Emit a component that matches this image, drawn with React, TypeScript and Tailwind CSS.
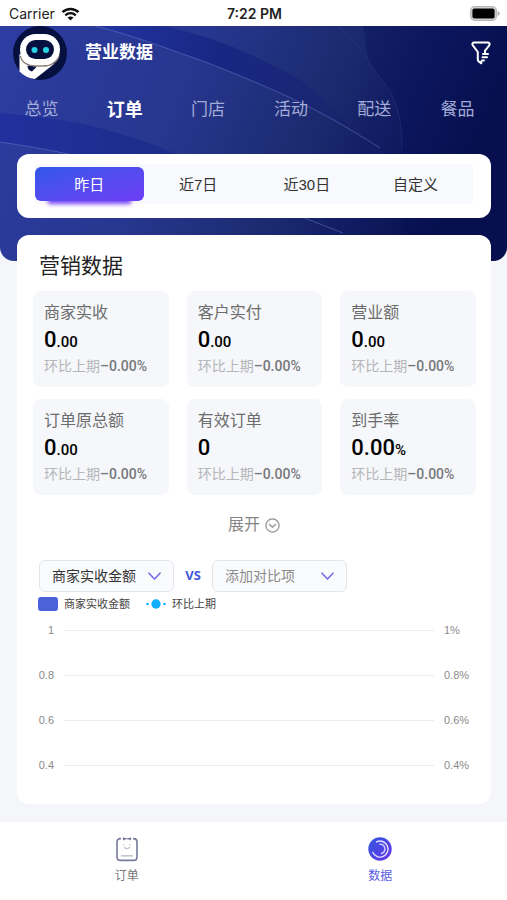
import { useState } from "react";

const cjk = "font-['Liberation_Sans','Noto_Sans_CJK_SC',sans-serif]";

const tabs = ["总览", "订单", "门店", "活动", "配送", "餐品"];
const ranges = ["昨日", "近7日", "近30日", "自定义"];

const metrics = [
  { label: "商家实收", whole: "0", rest: ".00" },
  { label: "客户实付", whole: "0", rest: ".00" },
  { label: "营业额", whole: "0", rest: ".00" },
  { label: "订单原总额", whole: "0", rest: ".00" },
  { label: "有效订单", whole: "0", rest: "" },
  { label: "到手率", whole: "0.00", rest: "%" },
];

const ticks = [
  ["1", "1%"],
  ["0.8", "0.8%"],
  ["0.6", "0.6%"],
  ["0.4", "0.4%"],
];

function StatusBar() {
  return (
    <div className="grid h-[26px] grid-cols-3 items-center bg-white pt-px pr-[7px] pl-[9px] font-['Inter',sans-serif] text-sm text-[#222]">
      <div className="flex items-center gap-[6px]">
        <span>Carrier</span>
        <svg width="19" height="14" viewBox="0 0 18 14" fill="none" stroke="#111" aria-hidden="true">
          <path d="M1 5.2C5.6.9 12.4.9 17 5.2" strokeWidth="2.5" />
          <path d="M3.8 8.3c3-2.8 7.4-2.8 10.4 0" strokeWidth="2.3" />
          <path d="M6 10.6c1.6-1.5 4.400-1.5 6 0L9 13.6z" fill="#111" stroke="none" />
        </svg>
      </div>
      <div className="text-center font-semibold">7:22 PM</div>
      <svg className="justify-self-end" width="30" height="15" viewBox="0 0 30 15" aria-hidden="true">
        <rect x=".7" y=".7" width="25.6" height="13.6" rx="4" fill="#d8d8d8" stroke="#b5b5b5" strokeWidth="1.3" />
        <rect x="2.4" y="2.4" width="22.2" height="10.2" rx="2" fill="#000" />
        <path d="M27.6 5v5c1.2-.4 2-1.300 2-2.500s-.8-2.100-2-2.500z" fill="#a9a9a9" />
      </svg>
    </div>
  );
}

function HeaderBackdrop() {
  return (
    <svg
      className="absolute inset-0 size-full"
      viewBox="0 0 507 235"
      preserveAspectRatio="none"
      aria-hidden="true"
    >
      <defs>
        <linearGradient id="base" x1="0" y1="0" x2="1" y2="0.2">
          <stop offset="0" stopColor="#2d3da2" />
          <stop offset=".4" stopColor="#27368e" />
          <stop offset=".68" stopColor="#1b2a6e" />
          <stop offset=".82" stopColor="#111c62" />
          <stop offset="1" stopColor="#08104a" />
        </linearGradient>
        <linearGradient id="band" x1="0" y1="0" x2="1" y2="0">
          <stop offset="0" stopColor="#2234a0" />
          <stop offset=".45" stopColor="#182682" />
          <stop offset="1" stopColor="#15206a" stopOpacity=".3" />
        </linearGradient>
        <linearGradient id="low" x1="0" y1="0" x2="1" y2="0">
          <stop offset="0" stopColor="#20319e" />
          <stop offset=".5" stopColor="#1c2c88" />
          <stop offset="1" stopColor="#152068" stopOpacity=".3" />
        </linearGradient>
      </defs>
      <rect width="507" height="235" fill="url(#base)" />
      <path d="M363 0C366 12 366 26 370 37C378 52 388 58 393 71C401 90 402 106 402 124V235H507V0Z" fill="#070f58" opacity=".35" />
      <path d="M337 0C350 8 358 20 370 37C378 52 388 58 393 71C401 90 402 106 402 124" fill="none" stroke="#4a59b0" opacity=".25" />
      <path d="M95 0C135 10 165 22 200 34C232 46 255 56 280 67C318 84 345 100 380 122C362 108 350 98 333 84C322 72 314 63 300 54C280 42 257 31 233 21C210 12 188 5 163 0Z" fill="url(#band)" />
      <path d="M95 0C135 10 165 22 200 34C232 46 255 56 280 67C318 84 345 100 380 122" fill="none" stroke="#8090d8" opacity=".4" />
      <path d="M0 87C35 90 70 94 100 102C125 109 147 116 167 124C230 150 290 176 343 207C330 203 320 198 307 193C220 160 130 138 63 127C45 123 20 119 0 116Z" fill="url(#low)" />
      <path d="M0 116C20 119 45 123 63 127C130 138 220 160 307 193L343 207" fill="none" stroke="#8090d8" opacity=".4" />
    </svg>
  );
}

function Robot() {
  return (
    <svg width="54" height="54" viewBox="0 0 54 54" className="shrink-0" aria-hidden="true">
      <circle cx="27" cy="27" r="27" fill="#06103f" />
      <path d="M6.500 28V45.500C11 50 16 52.500 22 53L41 38Z" fill="#fff" />
      <path d="M14.500 39.500 24 40.500 19 45.500q-4.500-1-4.500-6z" fill="#06103f" />
      <path d="M7.500 30c1 7 8 10 15 10h7c8 0 15-3.500 16.500-11" fill="none" stroke="#8d8578" strokeWidth="1.500" />
      <rect x="7" y="8" width="40" height="31" rx="15.500" fill="#fff" />
      <rect x="13" y="14" width="28" height="19" rx="9.500" fill="#06103f" />
      <circle cx="21.500" cy="24" r="3" fill="#27d3e6" />
      <circle cx="33" cy="24" r="3" fill="#27d3e6" />
    </svg>
  );
}

function Header() {
  const [tab, setTab] = useState(1);
  const [range, setRange] = useState(0);
  return (
    <header className="relative overflow-hidden rounded-b-[14px] pb-[43px]">
      <HeaderBackdrop />
      <div className="relative">
        <div className="flex items-center pr-4 pl-[13px]">
          <Robot />
          <h1 className="ml-[18px] flex-1 text-[17px] font-bold text-white">营业数据</h1>
          <button type="button" aria-label="筛选" className="text-white">
            <svg width="20" height="24" viewBox="0 0 20 24" fill="none" stroke="currentColor" strokeWidth="2" strokeLinecap="round" strokeLinejoin="round">
              <path d="M14.300 9.500 18.200 4.300c.9-1.300.3-2.700-1.500-2.700H3.300c-1.800 0-2.400 1.400-1.500 2.700L6.800 11v7.500c0 1.500.8 2.400 3.500 3.800V20.500" />
              <path d="M14 9.500v2.800M12 13h5M11.500 16.200h4.500M11 19.400h2" />
            </svg>
          </button>
        </div>
        <nav className="grid h-[58px] grid-cols-6 items-center pt-[2px] pr-2">
          {tabs.map((t, i) => (
            <button
              key={t}
              type="button"
              onClick={() => setTab(i)}
              className={i === tab ? "text-lg font-bold text-white" : "text-[17px] text-[#a3acd8]"}
            >
              {t}
            </button>
          ))}
        </nav>
        <div className="mt-4 mr-4 ml-[17px] rounded-xl bg-white px-[18px] pt-[10px] pb-[14px]">
          <div className="grid h-10 grid-cols-4 items-center rounded bg-[#f8f9fc] pr-[3px]">
            {ranges.map((r, i) => (
              <button
                key={r}
                type="button"
                onClick={() => setRange(i)}
                className={
                  i === range
                    ? "h-[34px] rounded-md bg-linear-to-br from-[#2f57ea] to-[#6d3df5] pt-[2px] text-[15px] text-white shadow-[0_16px_4px_-13px_#7a45f5]"
                    : "h-[34px] pt-[2px] text-[15px] text-[#333]"
                }
              >
                {r}
              </button>
            ))}
          </div>
        </div>
      </div>
    </header>
  );
}

function Metrics() {
  return (
    <div className="grid grid-cols-3 gap-x-[18px] gap-y-3 pr-[15px] pl-4">
      {metrics.map((m) => (
        <div key={m.label} className="h-24 rounded-lg bg-[#f5f7fa] px-[11px] pt-[10px] whitespace-nowrap">
          <div className="text-base leading-6 text-[#6c6c6c]">{m.label}</div>
          <div className="font-['Roboto',sans-serif] text-[22px] leading-[30px] font-medium text-black">
            {m.whole}
            <span className="text-[15px]">{m.rest}</span>
          </div>
          <div className="text-sm leading-[18px] text-[#b5b6b9]">
            环比上期
            <span className="font-['Roboto',sans-serif] font-medium text-[#77787b]">–0.00%</span>
          </div>
        </div>
      ))}
    </div>
  );
}

function Picker({ label, value, muted }: { label: string; value: string; muted?: boolean }) {
  return (
    <div className="relative w-[135px]">
      <select
        aria-label={label}
        className={
          muted
            ? "block h-8 w-full appearance-none rounded-md border border-[#e3e5ea] bg-[#fafbfd] pl-3 text-[14px] text-[#8b8b8b]"
            : "block h-8 w-full appearance-none rounded-md border border-[#e3e5ea] bg-[#fafbfd] pl-3 text-[14px] text-[#333]"
        }
      >
        <option>{value}</option>
      </select>
      <svg className="pointer-events-none absolute top-3 right-[13px]" width="13" height="9" viewBox="0 0 13 9" fill="none" stroke="#7b69ea" strokeWidth="1.600" strokeLinecap="round" strokeLinejoin="round" aria-hidden="true">
        <path d="M1 1.200 6.500 7 12 1.200" />
      </svg>
    </div>
  );
}

function Chart() {
  return (
    <div className="pr-[15px] pl-[21px]">
      <div className="flex h-6 items-center text-[11px] text-[#444]">
        <span className="h-[14px] w-5 rounded-[3px] bg-[#4c62d9]" />
        <span className="ml-[6px]">商家实收金额</span>
        <svg className="mr-[6px] ml-4" width="20" height="10" viewBox="0 0 20 10" fill="#12aefc" aria-hidden="true">
          <circle cx="1.500" cy="5" r="1.300" />
          <circle cx="10" cy="5" r="4.700" />
          <circle cx="18.500" cy="5" r="1.300" />
        </svg>
        <span>环比上期</span>
      </div>
      <div className="-mt-2 pb-4">
        {ticks.map(([l, r]) => (
          <div key={l} className="flex h-[45px] items-center text-[11px] text-[#8a8a8a]">
            <span className="w-4 text-right">{l}</span>
            <span className="mx-[10px] h-px flex-1 bg-[#ebedf0]" />
            <span className="w-8">{r}</span>
          </div>
        ))}
      </div>
    </div>
  );
}

function TabBar() {
  return (
    <nav className="grid h-[78px] grid-cols-2 bg-white text-xs">
      <a href="#orders" className="flex flex-col items-center gap-[6px] pt-[14px] text-[#777]">
        <svg width="26" height="26" viewBox="0 0 26 26" fill="none" strokeLinecap="round" aria-hidden="true">
          <path d="M6.500 2.600Q3 2.600 3 6v15q0 3.400 3.500 3.400h13q3.500 0 3.500-3.400V6q0-3.400-3.500-3.400" stroke="#777a9b" strokeWidth="1.600" />
          <path d="M9 1.200 12 2.300h2L17 1.200v3.200L14 3.300h-2L9 4.400z" fill="#777a9b" />
          <path d="M10 8.500v.8M16 8.500v.8M10.500 11.500q2.500 2.600 5 0" stroke="#bfc1cd" strokeWidth="1.100" />
          <path d="M7.500 19.800h11" stroke="#b3b5c6" strokeWidth="1.300" />
        </svg>
        订单
      </a>
      <a href="#data" aria-current="page" className="flex flex-col items-center gap-[6px] pt-[14px] text-[#5a5be0]">
        <svg width="26" height="26" viewBox="0 0 26 26" fill="none" strokeLinecap="round" aria-hidden="true">
          <defs>
            <linearGradient id="disc" x1="0" y1="0" x2="1" y2="1">
              <stop offset="0" stopColor="#3059df" />
              <stop offset="1" stopColor="#6a32e6" />
            </linearGradient>
          </defs>
          <circle cx="13" cy="13" r="11.700" fill="url(#disc)" />
          <path d="M9.500 5.900A8 8 0 1 1 5.700 16.300" stroke="#e2e0ff" strokeWidth="1.400" />
          <path d="M13 8.300A4.700 4.700 0 0 1 14.500 17.500" stroke="#cfcdfd" strokeWidth="1.500" />
        </svg>
        数据
      </a>
    </nav>
  );
}

export default function App() {
  return (
    <div className={`flex min-h-screen flex-col bg-[#f4f6fa] ${cjk}`}>
      <StatusBar />
      <Header />
      <main className="relative z-10 mt-[-26px] mr-4 mb-[18px] ml-[17px] rounded-xl bg-white">
        <h2 className="px-[22px] pt-4 pb-[10px] text-[21px] leading-[30px] text-[#222]">营销数据</h2>
        <Metrics />
        <button type="button" className="mx-auto mt-[18px] flex h-6 items-center gap-[5px] text-base text-[#858585]">
          展开
          <svg width="15" height="15" viewBox="0 0 15 15" fill="none" stroke="#8f8f8f" strokeWidth="1.200" strokeLinecap="round" strokeLinejoin="round" aria-hidden="true">
            <circle cx="7.500" cy="7.500" r="6.600" />
            <path d="M4.500 6.500 7.500 9.200 10.500 6.500" />
          </svg>
        </button>
        <div className="mt-[23px] flex items-center px-[22px]">
          <Picker label="指标" value="商家实收金额" />
          <span className="w-[38px] text-center font-['Noto_Sans',sans-serif] text-[13px] font-bold text-[#3f5bd9]">VS</span>
          <Picker label="对比项" value="添加对比项" muted />
        </div>
        <Chart />
      </main>
      <div className="mt-auto">
        <TabBar />
      </div>
    </div>
  );
}
